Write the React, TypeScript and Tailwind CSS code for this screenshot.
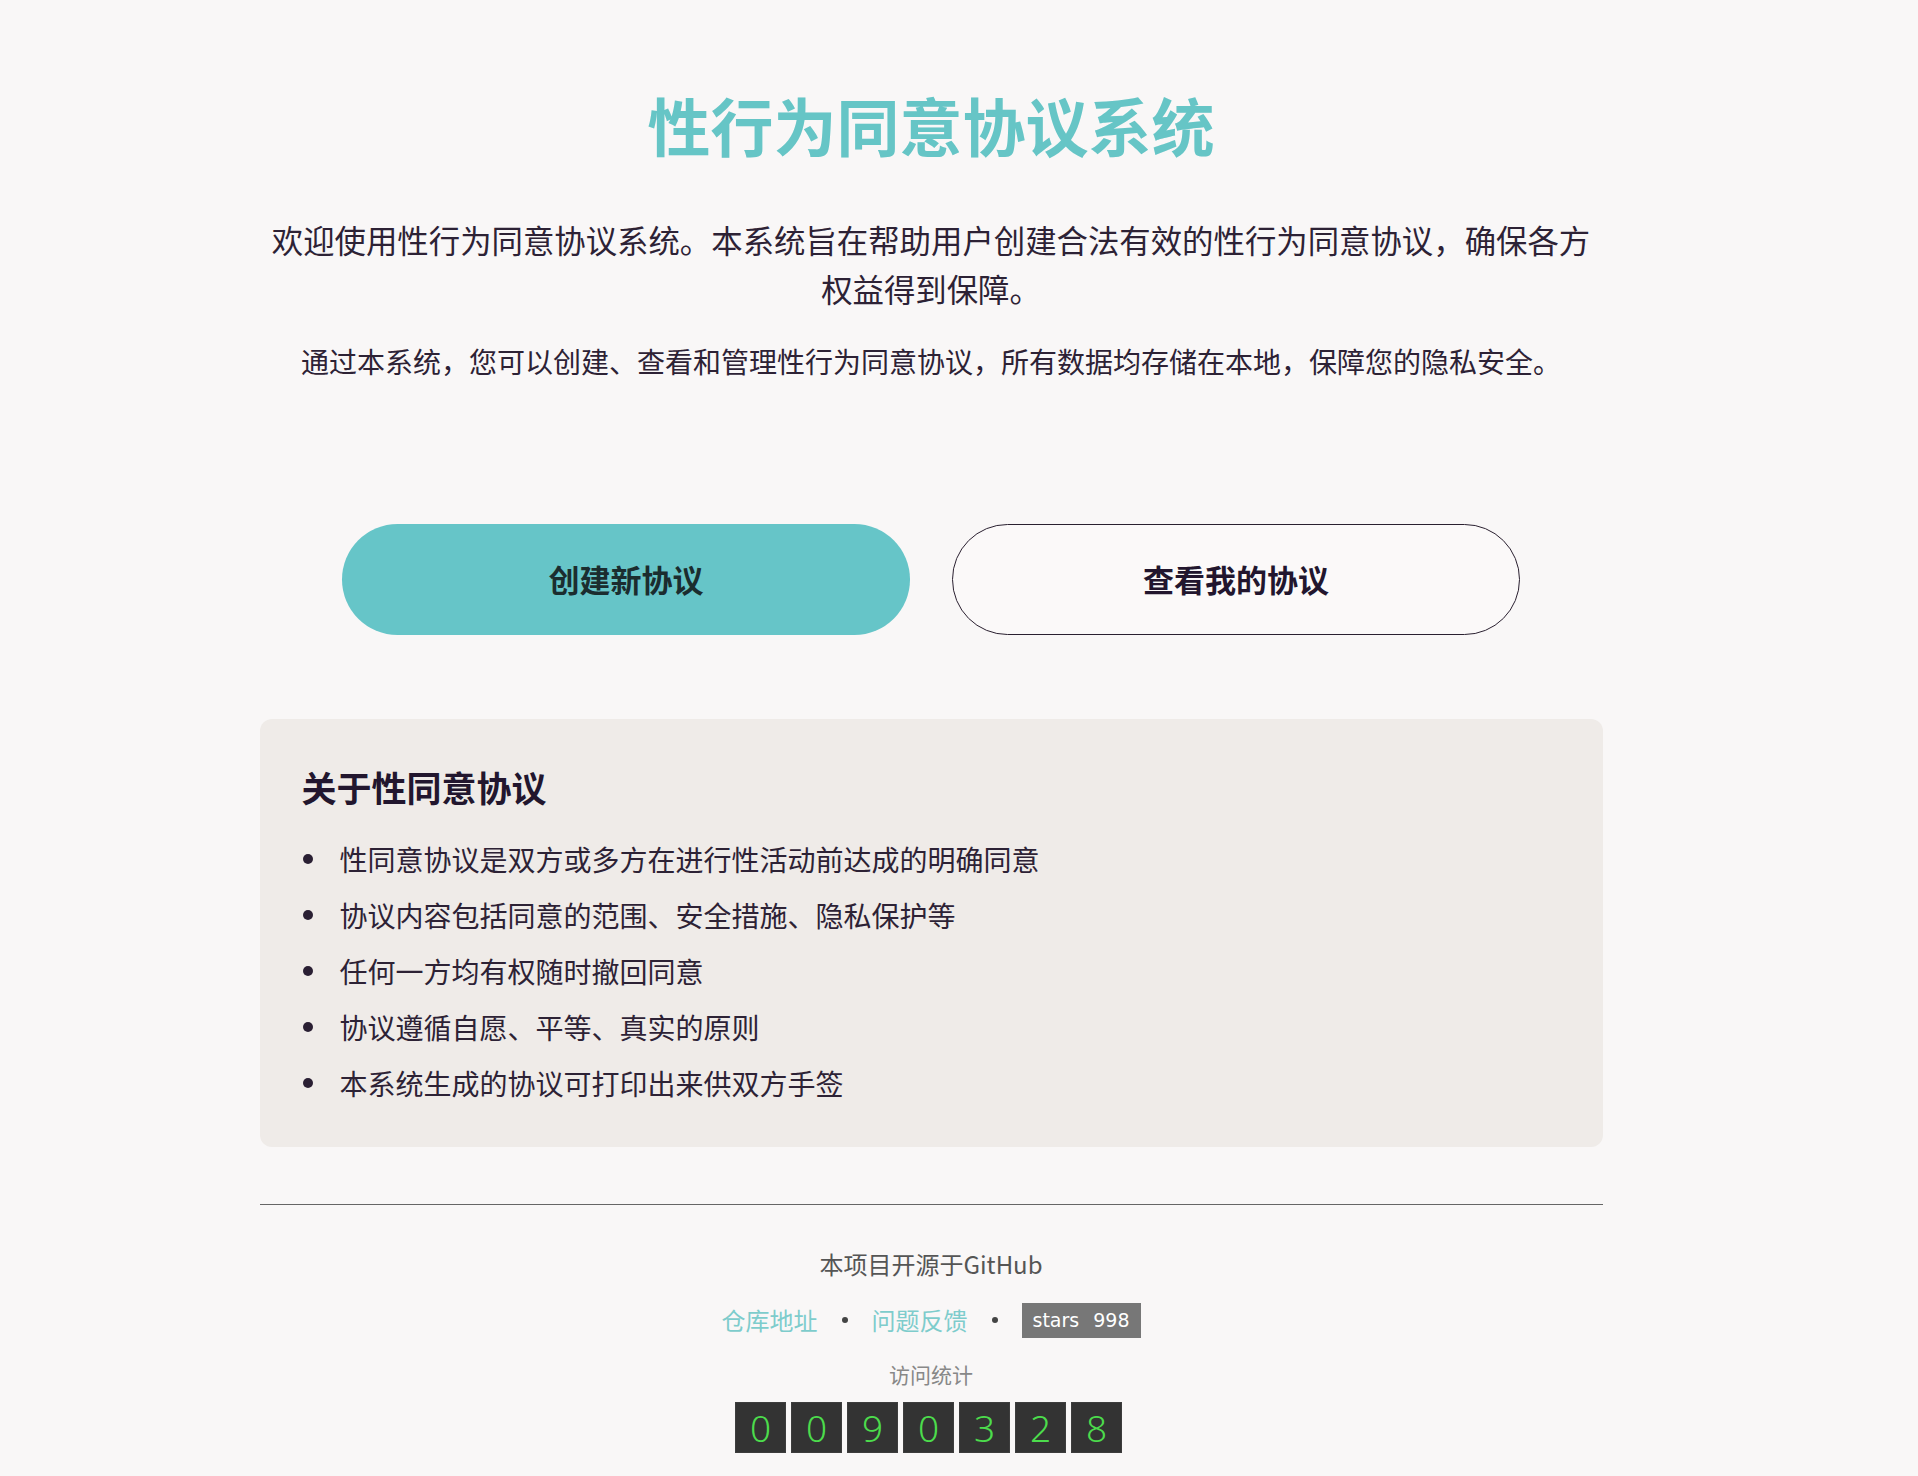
import React from 'react';

const points = [
  '性同意协议是双方或多方在进行性活动前达成的明确同意',
  '协议内容包括同意的范围、安全措施、隐私保护等',
  '任何一方均有权随时撤回同意',
  '协议遵循自愿、平等、真实的原则',
  '本系统生成的协议可打印出来供双方手签',
];

const visits = '0090328'.split('');

const App: React.FC = () => {
  return (
    <div
      className="min-h-screen bg-[#f9f7f7] pr-[56px] pb-[24px] text-[#2d2235]"
      style={{ fontFamily: '"Noto Sans CJK SC", "Noto Sans", sans-serif' }}
    >
      <div className="mx-auto w-[1343px] flex flex-col">
        <h1 className="pt-[86px] text-center text-[63px] leading-[76px] font-bold text-[#66c5c6]">
          性行为同意协议系统
        </h1>

        <p className="mt-[53px] mx-auto w-[1325px] text-center text-[31.4px] leading-[49px]">
          欢迎使用性行为同意协议系统。本系统旨在帮助用户创建合法有效的性行为同意协议，确保各方权益得到保障。
        </p>
        <p className="mt-[26px] text-center text-[28px] leading-[45px]">
          通过本系统，您可以创建、查看和管理性行为同意协议，所有数据均存储在本地，保障您的隐私安全。
        </p>

        {/* main actions */}
        <div className="mt-[140px] flex justify-center gap-[42px]">
          <button className="w-[568px] h-[111px] rounded-full bg-[#66c5c8] text-[31px] font-bold text-[#1b2d2f]">
            创建新协议
          </button>
          <button className="w-[568px] h-[111px] rounded-full border border-[#2a2030] bg-[#fbf9f9] text-[31px] font-bold text-[#22162e]">
            查看我的协议
          </button>
        </div>

        {/* about card */}
        <div className="mt-[84px] rounded-[12px] bg-[#efebe8] pl-[42px] pr-[42px] pt-[45px] pb-[36px]">
          <h2 className="text-[35px] leading-[46px] font-bold text-[#22162e]">关于性同意协议</h2>
          <ul className="mt-[21px] flex flex-col">
            {points.map((p) => (
              <li key={p} className="flex items-center h-[56px] text-[28px]">
                <span className="ml-[1px] w-[10px] h-[10px] rounded-full bg-[#2a1f33] shrink-0" />
                <span className="ml-[27px]">{p}</span>
              </li>
            ))}
          </ul>
        </div>

        <div className="mt-[57px] h-px bg-[#666]" />

        {/* footer */}
        <footer className="flex flex-col items-center">
          <p className="mt-[41px] text-[24px] leading-[36px] text-[#555]">本项目开源于GitHub</p>
          <div className="mt-[20px] flex items-center gap-[24px] text-[24px]">
            <a className="text-[#7ecccc]">仓库地址</a>
            <span className="w-[6px] h-[6px] rounded-full bg-[#444]" />
            <a className="text-[#7ecccc]">问题反馈</a>
            <span className="w-[6px] h-[6px] rounded-full bg-[#444]" />
            <span
              className="flex items-center h-[35px] w-[119px] bg-[#777] pl-[11px] gap-[14px] text-[19px] text-white"
              style={{ fontFamily: '"DejaVu Sans", Verdana, sans-serif' }}
            >
              <span>stars</span>
              <span>998</span>
            </span>
          </div>
          <p className="mt-[21px] text-[21px] leading-[30px] text-[#888]">访问统计</p>
          <div className="mt-[13px] mr-[5px] flex gap-[5px]">
            {visits.map((d, i) => (
              <span
                key={i}
                className="w-[51px] h-[51px] flex items-center justify-center bg-[#333] border border-[#3d3d3d] text-[37px] font-light text-[#4cdc4c]"
                style={{ fontFamily: '"Noto Sans", sans-serif' }}
              >
                {d}
              </span>
            ))}
          </div>
        </footer>
      </div>
    </div>
  );
};

export default App;
